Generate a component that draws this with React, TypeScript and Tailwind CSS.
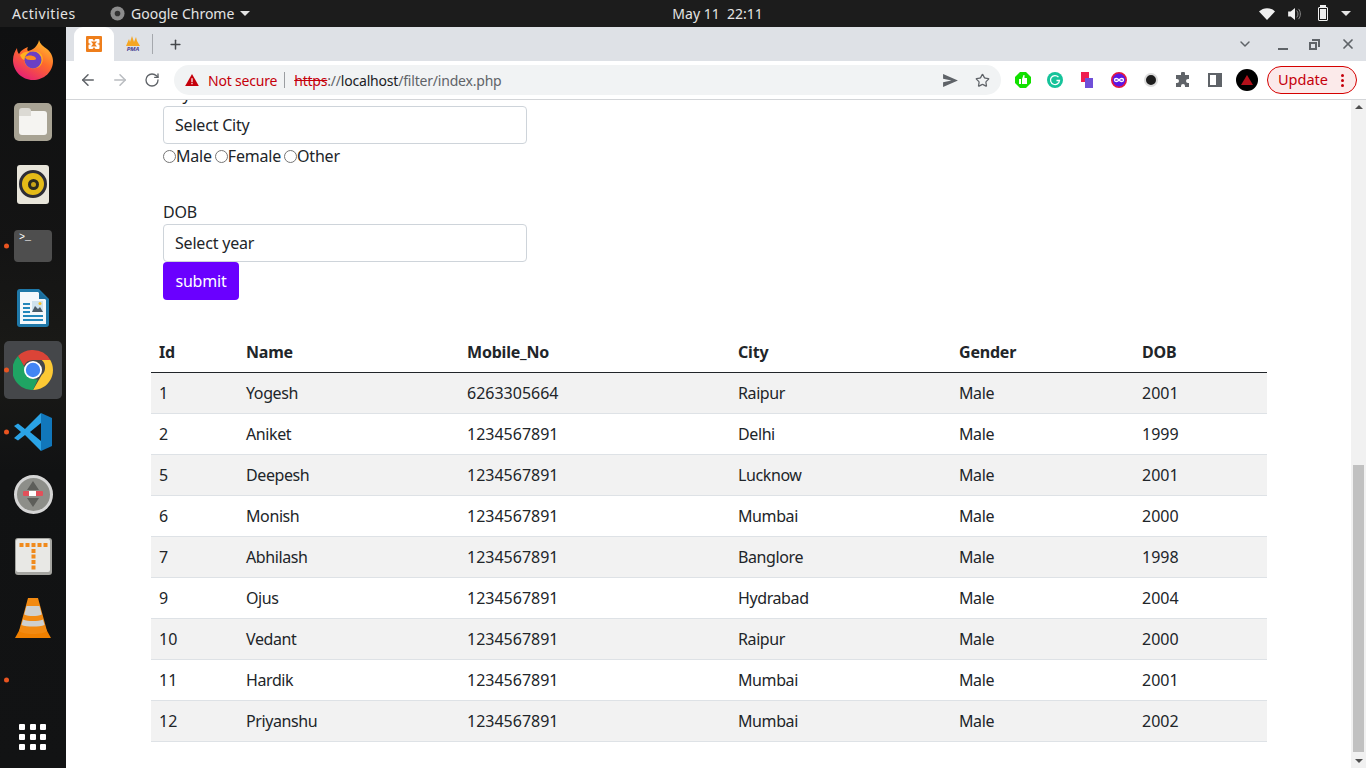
import { ArrowLeft, ArrowRight, ChevronDown, Plus, RotateCw, Star, X } from "lucide-react";
import React from "react";

const ui = "font-['Noto_Sans',sans-serif]";

const rows = [
  ["1", "Yogesh", "6263305664", "Raipur", "Male", "2001"],
  ["2", "Aniket", "1234567891", "Delhi", "Male", "1999"],
  ["5", "Deepesh", "1234567891", "Lucknow", "Male", "2001"],
  ["6", "Monish", "1234567891", "Mumbai", "Male", "2000"],
  ["7", "Abhilash", "1234567891", "Banglore", "Male", "1998"],
  ["9", "Ojus", "1234567891", "Hydrabad", "Male", "2004"],
  ["10", "Vedant", "1234567891", "Raipur", "Male", "2000"],
  ["11", "Hardik", "1234567891", "Mumbai", "Male", "2001"],
  ["12", "Priyanshu", "1234567891", "Mumbai", "Male", "2002"],
];

const Firefox = () => (
  <svg viewBox="0 0 40 40" className="h-10 w-10">
    <defs>
      <linearGradient id="ff" x1="0.8" y1="0" x2="0.2" y2="1">
        <stop offset="0" stopColor="#ffc22e" />
        <stop offset="0.45" stopColor="#ff6a2b" />
        <stop offset="1" stopColor="#e3197c" />
      </linearGradient>
    </defs>
    <path d="M26 0c1 4 4 6 8 9 5 4 6 9 6 12 0 11-9 19-20 19S0 31 0 20C0 15 2 11 4 8c0 3 1 5 2 6 2-4 6-6 9-7-1 2-1 3 0 4 5-1 10-5 11-11z" fill="url(#ff)" />
    <path d="M7 15c3-3 7-4 10-3 3-2 8-1 11 2 3 4 2 10-2 13-4 2-9 2-12-1-2-2-3-4-2-6-2 0-4-2-5-5z" fill="#ffb01f" />
    <circle cx="20" cy="20" r="8.5" fill="#6b3fc4" />
    <path d="M12 17c3-2 7-2 10 0 2 2 1 3-2 3-4 0-7 0-8-3z" fill="#ff8b1f" />
  </svg>
);

const Chrome = () => (
  <svg viewBox="0 0 40 40" className="h-10 w-10">
    <path d="M20 0a20 20 0 0 1 17.3 10H20a10 10 0 0 0-9.2 6L5 6A20 20 0 0 1 20 0z" fill="#db4437" />
    <path d="M37.3 10A20 20 0 0 1 20 40l8.7-15a10 10 0 0 0 0-15z" fill="#fcc934" />
    <path d="M5 6l8.8 15a10 10 0 0 0 11 8.5L20 40A20 20 0 0 1 5 6z" fill="#1fa463" />
    <circle cx="20" cy="20" r="9" fill="#fff" />
    <circle cx="20" cy="20" r="7.2" fill="#4285f4" />
  </svg>
);

const VSCode = () => (
  <svg viewBox="0 0 38 38" className="h-[38px] w-[38px]">
    <path d="M27 0L11 16 4 10.500 0 13l7 6-7 6 4 2.500L11 22l16 16z" fill="#2aa3e6" />
    <path d="M27 0l11 5v28l-11 5z" fill="#1177bb" />
    <path d="M27 10v18l-11-9z" fill="#111213" />
  </svg>
);

const Dock = () => {
  const dot = <span className="absolute left-[4px] top-1/2 h-[5px] w-[5px] -translate-y-1/2 rounded-full bg-[#e95420]" />;
  return (
    <aside className="relative flex w-[66px] shrink-0 flex-col bg-[linear-gradient(#0f1011_0,#141414_30%,#1a1a17_45%,#111213_60%,#121314_100%)] pt-[2px]">
      <div className="flex h-[62px] items-center justify-center">
        <Firefox />
      </div>
      <div className="flex h-[62px] items-center justify-center">
        <div className="flex h-[38px] w-[38px] items-center justify-center rounded-[5px] bg-[#a8a394]">
          <div className="relative mt-[2px] h-6 w-7 rounded-[3px] bg-[#f5f4f1]">
            <span className="absolute -top-[3px] left-0 h-2 w-3 rounded-t-[3px] bg-[#dcdad4]" />
          </div>
        </div>
      </div>
      <div className="flex h-[62px] items-center justify-center">
        <div className="flex h-[39px] w-8 items-center justify-center rounded-[3px] bg-[#e8e5da]">
          <div className="flex h-7 w-7 items-center justify-center rounded-full border-[3px] border-[#2d2d35] bg-[#e4bb18]">
            <span className="flex h-[11px] w-[11px] items-center justify-center rounded-full bg-[#2b2a20]">
              <span className="h-[5px] w-[5px] rounded-full bg-[#c9a518]" />
            </span>
          </div>
        </div>
      </div>
      <div className="relative flex h-[62px] items-center justify-center">
        {dot}
        <div className="h-8 w-[38px] rounded-[4px] bg-[#4e4e4e] px-[5px] pt-[1px] font-['Liberation_Mono',monospace] text-[10px] leading-[14px] text-white">
          &gt;_
        </div>
      </div>
      <div className="flex h-[62px] items-center justify-center">
        <svg viewBox="0 0 32 38" className="h-[38px] w-8">
          <path d="M0 3a3 3 0 0 1 3-3h19l10 10v25a3 3 0 0 1-3 3H3a3 3 0 0 1-3-3z" fill="#1f78a8" />
          <path d="M3 3h18l8 8v24H3z" fill="#f4f8fb" />
          <path d="M22 2l8 8h-8z" fill="#1b6d9c" />
          <path d="M6 14h7v2H6zM6 18h7v2H6zM6 22h7v2H6zM6 26h20v2H6zM6 30h20v2H6z" fill="#2487bb" />
          <path d="M15 12h11v11H15z" fill="#cfe2ee" />
          <path d="M15 23l3-6 3 3 2-2 3 5z" fill="#4b5a66" />
          <circle cx="23" cy="14.500" r="1.500" fill="#f5c026" />
        </svg>
      </div>
      <div className="relative flex h-[62px] items-center justify-center">
        {dot}
        <div className="flex h-[58px] w-[58px] items-center justify-center rounded-[5px] bg-[#45474a]">
          <Chrome />
        </div>
      </div>
      <div className="relative flex h-[62px] items-center justify-center">
        {dot}
        <VSCode />
      </div>
      <div className="flex h-[62px] items-center justify-center">
        <div className="relative flex h-[39px] w-[39px] items-center justify-center rounded-full border-[3px] border-[#d5d5d5] bg-[#8d8e89]">
          <svg viewBox="0 0 30 30" className="h-[30px] w-[30px]">
            <path d="M15 2l6 9H9zM15 28l-6-9h12z" fill="#5d5e5a" />
            <rect x="5" y="12" width="20" height="5" rx="1" fill="#e2505a" />
            <rect x="11" y="12" width="7" height="5" fill="#fff" />
          </svg>
        </div>
      </div>
      <div className="flex h-[62px] items-center justify-center">
        <svg viewBox="0 0 37 37" className="h-[37px] w-[37px]">
          <rect x="0" y="0" width="37" height="37" rx="3" fill="#a5a5a1" />
          <rect x="1" y="1" width="34" height="33" rx="2" fill="#e8e8e5" />
          <path d="M6 5h4v4H6zM12 5h4v4h-4zM18 5h4v4h-4zM24 5h4v4h-4zM30 5h4v4h-4z" fill="#f08a1c" transform="translate(-1.500 0)" />
          <path d="M16.500 11h4v4h-4zM16.500 16.500h4v4h-4zM16.500 22h4v4h-4zM16.500 27.500h4v4h-4z" fill="#f08a1c" />
        </svg>
      </div>
      <div className="flex h-[62px] items-center justify-center">
        <svg viewBox="0 0 36 40" className="h-10 w-9">
          <path d="M0 40l5-9h26l5 9z" fill="#f08000" />
          <path d="M13 0h10l9 33c-4 4-24 4-28 0z" fill="#f28a12" />
          <path d="M11.500 8h13l2.300 8.500c-5 2-13 2-17.600 0zM8 21.500c5 2 15 2 20 0l1.500 5.500c-5 2-18 2-23 0z" fill="#cfd0cf" />
        </svg>
      </div>
      <div className="relative h-[62px]">{dot}</div>
      <div className="mt-[-5px] grid h-[62px] grid-cols-3 content-center justify-center gap-x-[4px] gap-y-[4px] px-[19px]">
        {Array.from({ length: 9 }).map((_, i) => (
          <span key={i} className="h-[6px] w-[6px] rounded-[1px] bg-white" />
        ))}
      </div>
    </aside>
  );
};

const TopBar = () => (
  <header className={`${ui} flex h-[27px] shrink-0 items-center bg-[#1c1c1c] pl-3 pr-[15px] text-[14px] text-[#e4e4e4]`}>
    <span className="w-[98px] tracking-[0.55px]">Activities</span>
    <svg viewBox="0 0 16 16" className="mr-[6px] h-[15px] w-[15px]">
      <circle cx="8" cy="8" r="7.500" fill="#8c8c8c" />
      <circle cx="8" cy="8" r="3" fill="#333" />
    </svg>
    <span>Google Chrome</span>
    <span className="ml-[6px] h-0 w-0 border-x-[5px] border-t-[5px] border-x-transparent border-t-[#e4e4e4]" />
    <span className="ml-[422px] w-[100px] whitespace-pre">May 11  22:11</span>
    <div className="ml-auto flex items-center">
      <svg viewBox="0 0 16 12" className="h-3 w-4">
        <path d="M0 3.500C4.500-1 11.500-1 16 3.500L8 12z" fill="#f0f0f0" />
      </svg>
      <svg viewBox="0 0 16 14" className="ml-[13px] h-[12px] w-[14px]">
        <path d="M0 4h3l5-4v14l-5-4H0z" fill="#f0f0f0" />
        <path d="M10 3c2 2 2 6 0 8M12 1c3 3 3 9 0 12" fill="none" stroke="#9a9a9a" strokeWidth="1" />
      </svg>
      <div className="relative ml-4 h-[14px] w-[10px] rounded-[1px] border border-[#f0f0f0] p-[1px]">
        <div className="h-full w-full bg-[#f0f0f0]" />
        <span className="absolute -top-[3px] left-[1px] h-[2px] w-[6px] bg-[#f0f0f0]" />
      </div>
      <span className="ml-[13px] h-0 w-0 border-x-[5px] border-t-[5px] border-x-transparent border-t-[#e4e4e4]" />
    </div>
  </header>
);

const ChromeBar = () => (
  <div className={`${ui} shrink-0`}>
    <div className="flex h-[34px] items-center bg-[#dee1e6] pl-2">
      <div className="flex h-[34px] w-10 items-center justify-center rounded-t-[9px] bg-white">
        <svg viewBox="0 0 16 16" className="h-4 w-4">
          <rect width="16" height="16" rx="1" fill="#ee7e1b" />
          <path d="M3.500 3h3L8 5l1.500-2h3a1 1 0 0 1 1 1v2.500a1 1 0 0 1-1 1h-1L11.500 8l1 .5a1 1 0 0 1 1 1V12a1 1 0 0 1-1 1h-3L8 11l-1.500 2h-3a1 1 0 0 1-1-1V9.500a1 1 0 0 1 1-1h1V8l-1-.5a1 1 0 0 1-1-1V4a1 1 0 0 1 1-1z" fill="#fff" />
          <path d="M5 5.500h6L9 8l2 2.500H5L7 8z" fill="#ee7e1b" />
        </svg>
      </div>
      <div className="flex h-[34px] w-[38px] flex-col items-center justify-center">
        <svg viewBox="0 0 16 10" className="h-[10px] w-4">
          <path d="M1 10l3-7 1 3 2-6 2 6 2-5 1 4 3 5z" fill="#f5a623" />
        </svg>
        <span className="text-[6px] font-bold italic leading-[6px] text-[#4b3f92]">PMA</span>
      </div>
      <span className="h-[20px] w-px bg-[#a5a8ad]" />
      <Plus className="ml-[15px] h-[15px] w-[15px] text-[#45484c]" strokeWidth={2.4} />
      <div className="ml-auto flex items-center pr-[10px] text-[#5f6368]">
        <ChevronDown className="mr-[25px] h-4 w-4" strokeWidth={2.2} />
        <span className="mr-[21px] mt-[9px] h-[2px] w-[10px] bg-[#5f6368]" />
        <svg viewBox="0 0 11 11" className="mr-[20px] h-[11px] w-[11px]">
          <path d="M3 0h8v8H9V2H3zM0 3h8v8H0zM2 5v4h4V5z" fill="#5f6368" fillRule="evenodd" />
        </svg>
        <X className="h-4 w-4" strokeWidth={2.6} />
      </div>
    </div>
    <div className="flex h-[39px] items-center border-b border-[#d3d5d8] bg-white pl-[13px] text-[#5f6368]">
      <ArrowLeft className="h-[18px] w-[18px]" strokeWidth={2} />
      <ArrowRight className="ml-[14px] h-[18px] w-[18px] text-[#b9bcc0]" strokeWidth={2} />
      <RotateCw className="ml-[15px] h-4 w-4" strokeWidth={2} />
      <div className="ml-[14px] flex h-[30px] w-[827px] items-center rounded-full bg-[#f1f3f4] pl-[11px] pr-[11px] text-[14px] tracking-[-0.2px]">
        <svg viewBox="0 0 16 14" className="h-[12px] w-[14px]">
          <path d="M8 0l8 14H0z" fill="#c5000b" />
          <path d="M7.300 5h1.400v4.500H7.300zM7.300 10.500h1.400V12H7.300z" fill="#fff" />
        </svg>
        <span className="ml-[9px] text-[#c5000b]">Not secure</span>
        <span className="ml-[7px] mr-[9px] h-4 w-px bg-[#9a9da1]" />
        <span className="text-[#c5000b] line-through">https</span>
        <span className="text-[#5f6368]">://</span>
        <span className="text-[#202124]">localhost</span>
        <span className="text-[#5f6368]">/filter/index.php</span>
        <svg viewBox="0 0 16 14" className="ml-auto h-[13px] w-[15px]">
          <path d="M0 0l16 7-16 7 0-5 9-2-9-2z" fill="#5f6368" />
        </svg>
        <Star className="ml-[17px] h-[15px] w-[15px]" strokeWidth={2} />
      </div>
      <div className="ml-[6px] flex items-center">
        <span className="flex w-8 justify-center">
          <svg viewBox="0 0 16 16" className="h-4 w-4">
            <path d="M5 0h6l5 5v6l-5 5H5l-5-5V5z" fill="#12e000" />
            <path d="M4 7h2v5H4zM7 7l1.500-4h1v3h2.500v6H7z" fill="#fff" />
          </svg>
        </span>
        <span className="flex w-8 justify-center">
          <svg viewBox="0 0 16 16" className="h-4 w-4">
            <circle cx="8" cy="8" r="8" fill="#15c39a" />
            <path d="M11.500 5.200A4.500 4.500 0 1 0 12.500 8.500H9.500" fill="none" stroke="#fff" strokeWidth="1.300" />
          </svg>
        </span>
        <span className="flex w-8 justify-center">
          <span className="relative h-[16px] w-3">
            <span className="absolute left-0 top-0 h-[10px] w-2 bg-[#ef1e50]" />
            <span className="absolute bottom-0 right-0 h-[10px] w-2 bg-[#6f4fd8]" />
          </span>
        </span>
        <span className="flex w-8 justify-center">
          <svg viewBox="0 0 16 16" className="h-4 w-4">
            <circle cx="8" cy="8" r="7.200" fill="#5b16e6" stroke="#e5173f" strokeWidth="1.600" />
            <path d="M8 8C6.500 6 3.500 6 3.500 8s3 2 4.500 0 4.500-2 4.500 0-3 2-4.500 0z" fill="none" stroke="#fff" strokeWidth="1.300" />
          </svg>
        </span>
        <span className="flex w-8 justify-center">
          <span className="h-[14px] w-[14px] rounded-full border-[2px] border-[#dcdcdc] bg-[#1d1d1d]" />
        </span>
        <span className="flex w-8 justify-center">
          <svg viewBox="0 0 16 16" className="h-4 w-4">
            <path d="M6 1.500a2 2 0 0 1 4 0V3h4v4h-1a2 2 0 0 0 0 4h1v4h-4v-1a2 2 0 0 0-4 0v1H1v-4h1a2 2 0 0 0 0-4H1V3h5z" fill="#5f6368" />
          </svg>
        </span>
        <span className="flex w-8 justify-center">
          <span className="flex h-[14px] w-[14px] border-[2px] border-[#5f6368] bg-[#5f6368]">
            <span className="h-full w-[6px] bg-white" />
          </span>
        </span>
        <span className="flex w-8 justify-center">
          <span className="flex h-[22px] w-[22px] items-center justify-center rounded-full bg-black">
            <span className="h-0 w-0 border-x-[6px] border-b-[10px] border-x-transparent border-b-[#b3101a]" />
          </span>
        </span>
        <div className="ml-[4px] flex h-[28px] w-[90px] items-center rounded-full border border-[#d50000] bg-[#fbeaea] pl-[10px] text-[14.500px] text-[#c5000b]">
          Update
          <span className="ml-[13px] flex flex-col gap-[2px]">
            <span className="h-[3px] w-[3px] rounded-full bg-[#c5000b]" />
            <span className="h-[3px] w-[3px] rounded-full bg-[#c5000b]" />
            <span className="h-[3px] w-[3px] rounded-full bg-[#c5000b]" />
          </span>
        </div>
      </div>
    </div>
  </div>
);

const radio = "h-[13px] w-[13px] appearance-none rounded-full border border-[#767676] bg-white";

const Page = () => (
  <div className={`${ui} flex min-h-0 flex-1 overflow-hidden bg-white text-[16px] text-[#212529]`}>
    <main className="min-w-0 flex-1 overflow-hidden pl-[85px] pr-[84px]">
      <div className="-mt-[18px] ml-3 w-[364px] tracking-[-0.2px]">
        <label className="block h-6 leading-6">City</label>
        <div className="flex h-[38px] items-center rounded-[4px] border border-[#ced4da] bg-white px-[11px]">Select City</div>
        <div className="flex h-6 items-center">
          <input type="radio" name="g" className={radio} />
          <span>Male</span>
          <input type="radio" name="g" className={`${radio} ml-[3px]`} />
          <span>Female</span>
          <input type="radio" name="g" className={`${radio} ml-[3px]`} />
          <span>Other</span>
        </div>
        <label className="mt-[32px] block h-6 leading-6">DOB</label>
        <div className="flex h-[38px] items-center rounded-[4px] border border-[#ced4da] bg-white px-[11px]">Select year</div>
        <button className="block h-[38px] w-[76px] rounded-[4px] bg-[#6a00ff] text-white">submit</button>
      </div>
      <table className="mt-[31px] w-full table-fixed border-collapse">
        <colgroup>
          <col className="w-[87px]" />
          <col className="w-[221px]" />
          <col className="w-[271px]" />
          <col className="w-[221px]" />
          <col className="w-[183px]" />
          <col />
        </colgroup>
        <thead>
          <tr className="h-[41px] border-b border-b-[#212529] text-left font-bold">
            {["Id", "Name", "Mobile_No", "City", "Gender", "DOB"].map((h) => (
              <th key={h} className="px-2 pb-0 pt-[2px] font-bold tracking-[-0.2px]">{h}</th>
            ))}
          </tr>
        </thead>
        <tbody>
          {rows.map((r, i) => (
            <tr key={r[0]} className={`h-[41px] border-b border-[#dee2e6] ${i % 2 === 0 ? "bg-[#f2f2f2]" : "bg-white"}`}>
              {r.map((c, j) => (
                <td key={j} className={`px-2 py-0 ${j === 1 || j === 3 || j === 4 ? "tracking-[-0.4px]" : ""}`}>{c}</td>
              ))}
            </tr>
          ))}
        </tbody>
      </table>
    </main>
    <div className="flex w-[15px] shrink-0 flex-col items-center bg-[#f1f1f1]">
      <span className="mt-[5px] h-0 w-0 border-x-[4px] border-b-[4px] border-x-transparent border-b-[#505050]" />
      <div className="mt-auto mb-[7px] h-[287px] w-[11px] bg-[#c1c1c1]" />
      <span className="mb-[5px] h-0 w-0 border-x-[4px] border-t-[4px] border-x-transparent border-t-[#505050]" />
    </div>
  </div>
);

export default function App() {
  return (
    <div className="flex h-[768px] w-[1366px] flex-col overflow-hidden">
      <TopBar />
      <div className="flex min-h-0 flex-1">
        <Dock />
        <div className="flex min-w-0 flex-1 flex-col">
          <ChromeBar />
          <Page />
        </div>
      </div>
    </div>
  );
}
